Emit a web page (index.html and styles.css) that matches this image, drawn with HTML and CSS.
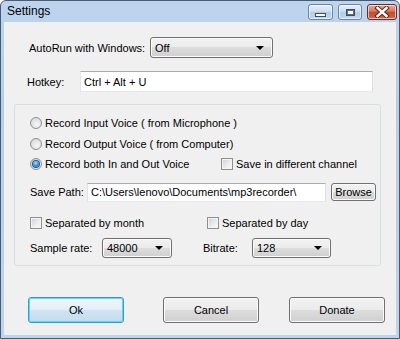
FILE: index.html
```html
<!DOCTYPE html>
<html lang="en">
<head>
    <meta charset="UTF-8">
    <meta name="viewport" content="width=device-width, initial-scale=1.0">
    <title>Settings</title>
    <link rel="stylesheet" href="styles.css">
</head>
<body>
    <div class="window">
        <div class="titlebar">
            <span class="title">Settings</span>
            <div class="caption">
                <span class="cap cap-min"><i></i></span>
                <span class="cap cap-max"><i></i></span>
                <span class="cap cap-close">
                    <svg width="16" height="12" viewBox="0 0 16 12">
                        <path d="M3.5 2 L12.5 10 M12.5 2 L3.5 10" stroke="#5a2a20" stroke-width="4.4" stroke-linecap="square"/>
                        <path d="M3.5 2 L12.5 10 M12.5 2 L3.5 10" stroke="#fff" stroke-width="2.4" stroke-linecap="square"/>
                    </svg>
                </span>
            </div>
        </div>

        <div class="client">
            <div class="row autorun">
                <label class="autorun-label">AutoRun with Windows:</label>
                <div class="combo combo-autorun"><span>Off</span><i class="arrow"></i></div>
            </div>

            <div class="row hotkey">
                <label class="hotkey-label">Hotkey:</label>
                <div class="textbox hotkey-box">Ctrl + Alt + U</div>
            </div>

            <div class="group">
                <div class="grow r1"><span class="radio"></span>Record Input Voice ( from Microphone )</div>
                <div class="grow r2"><span class="radio"></span>Record Output Voice ( from Computer)</div>
                <div class="grow r3">
                    <span class="opt opt-both"><span class="radio checked"><i></i></span>Record both In and Out Voice</span>
                    <span class="opt"><span class="check"></span>Save in different channel</span>
                </div>
                <div class="grow save">
                    <label class="save-label">Save Path:</label>
                    <div class="textbox path-box">C:\Users\lenovo\Documents\mp3recorder\</div>
                    <div class="btn btn-browse">Browse</div>
                </div>
                <div class="grow month">
                    <span class="opt opt-month"><span class="check"></span>Separated by month</span>
                    <span class="opt"><span class="check"></span>Separated by day</span>
                </div>
                <div class="grow sample">
                    <label class="rate-label">Sample rate:</label>
                    <div class="combo combo-rate"><span>48000</span><i class="arrow"></i></div>
                    <label class="bitrate-label">Bitrate:</label>
                    <div class="combo combo-bitrate"><span>128</span><i class="arrow"></i></div>
                </div>
            </div>

            <div class="buttons">
                <div class="btn btn-big btn-default">Ok</div>
                <div class="btn btn-big btn-cancel">Cancel</div>
                <div class="btn btn-big btn-donate">Donate</div>
            </div>
        </div>
    </div>
</body>
</html>
```

FILE: styles.css
```css
* {
    box-sizing: border-box;
}
body {
    margin: 0;
    font-family: "Liberation Sans", Arial, sans-serif;
    font-size: 11px;
    color: #000;
}
.window {
    width: 400px;
    height: 339px;
    display: flex;
    flex-direction: column;
    border: 1px solid #4a5b70;
    border-radius: 6px 6px 0 0;
    background: linear-gradient(#bdd4ee, #b7cee9 30%, #bed3ec);
    padding: 0 3px 3px;
}
.titlebar {
    height: 21px;
    display: flex;
    align-items: flex-start;
}
.title {
    font-size: 12px;
    line-height: 14px;
    margin: 3px 0 0 3px;
}
.caption {
    margin-left: auto;
    margin-right: -1px;
    display: flex;
    margin-top: 3px;
}
.cap {
    height: 16px;
    display: flex;
    align-items: center;
    justify-content: center;
    border: 1px solid #6e84a0;
    border-radius: 3px;
    background: linear-gradient(#e4eefa, #cfdff2 45%, #b5cbe6 50%, #c3d7ee);
    box-shadow: inset 0 0 0 1px rgba(255, 255, 255, 0.6);
}
.cap-min {
    width: 25px;
}
.cap-min i {
    width: 11px;
    height: 4px;
    margin-top: 5px;
    background: #fff;
    border: 1px solid #3c4d63;
}
.cap-max {
    width: 24px;
    margin-left: 5px;
}
.cap-max i {
    width: 9px;
    height: 7px;
    border: 1px solid #3c4d63;
    background: #fff;
    box-shadow: inset 0 0 0 1px #5d6f86;
}
.cap-close {
    width: 30px;
    margin-left: 5px;
    border-color: #6d2d23;
    background: linear-gradient(#ebaa98, #d9785f 45%, #c4462d 50%, #d36a4a);
}
.client {
    flex: 1;
    background: #f0f0f0;
}
.row {
    display: flex;
    align-items: center;
    height: 21px;
}
.autorun {
    margin-top: 15px;
    padding-left: 25px;
}
.autorun-label {
    width: 121px;
}
.combo {
    display: flex;
    align-items: center;
    height: 21px;
    padding: 0 8px 0 4px;
    border: 1px solid #707070;
    border-radius: 3px;
    background: linear-gradient(#f2f2f2, #ebebeb 50%, #dddddd 50%, #cfcfcf);
    box-shadow: inset 0 0 0 1px #fbfbfb;
}
.combo span {
    flex: 1;
}
.arrow {
    width: 0;
    height: 0;
    border-left: 4px solid transparent;
    border-right: 4px solid transparent;
    border-top: 4px solid #000;
}
.combo-autorun {
    width: 123px;
}
.hotkey {
    margin-top: 13px;
    padding-left: 23px;
}
.hotkey-label {
    width: 53px;
}
.textbox {
    display: flex;
    align-items: center;
    background: #fff;
    border: 1px solid;
    border-color: #abadb3 #dbdfe6 #e3e9ef #e2e3ea;
    white-space: nowrap;
    overflow: hidden;
}
.hotkey-box {
    width: 293px;
    height: 21px;
    padding-left: 3px;
}
.group {
    margin: 12px 0 0 10px;
    width: 367px;
    height: 162px;
    border: 1px solid #d5dfe5;
    border-radius: 3px;
    padding: 7px 0 7px 15px;
}
.grow {
    display: flex;
    align-items: center;
    height: 20px;
}
.r1, .r2 {
    height: 21px;
}
.r3 {
    height: 19px;
}
.opt {
    display: flex;
    align-items: center;
}
.opt-both {
    width: 191px;
}
.opt-month {
    width: 177px;
}
.radio {
    width: 12px;
    height: 12px;
    margin-right: 3px;
    border: 1px solid #8e8f8f;
    border-radius: 50%;
    background: radial-gradient(circle at 60% 65%, #f8f8f8, #dcdcdc 70%);
    display: flex;
    align-items: center;
    justify-content: center;
}
.radio.checked i {
    width: 6px;
    height: 6px;
    border-radius: 50%;
    background: radial-gradient(circle at 45% 35%, #a6e3fa, #2b8fd3 55%, #0c4f93);
    box-shadow: 0 0 0 1px #215a8e;
}
.check {
    width: 12px;
    height: 12px;
    margin-right: 3px;
    border: 1px solid #8e8f8f;
    background: linear-gradient(135deg, #cdd0d4, #eceef0 60%, #f8f8f8);
    box-shadow: inset 0 0 0 1px #f4f4f4;
}
.save {
    margin-top: 9px;
}
.save-label {
    width: 57px;
}
.path-box {
    width: 239px;
    height: 19px;
    padding-left: 3px;
}
.btn {
    display: flex;
    align-items: center;
    justify-content: center;
    border: 1px solid #707070;
    border-radius: 3px;
    background: linear-gradient(#f2f2f2, #ebebeb 50%, #dddddd 50%, #cfcfcf);
    box-shadow: inset 0 0 0 1px #fbfbfb;
}
.btn-browse {
    width: 45px;
    height: 18px;
    margin-left: 5px;
}
.month {
    margin-top: 11px;
}
.sample {
    margin-top: 5px;
}
.rate-label {
    width: 72px;
}
.combo-rate {
    width: 70px;
    height: 20px;
}
.bitrate-label {
    width: 49px;
    margin-left: 31px;
}
.combo-bitrate {
    width: 79px;
    height: 20px;
}
.buttons {
    display: flex;
    margin-top: 31px;
    padding-left: 24px;
}
.btn-big {
    width: 96px;
    height: 26px;
}
.btn-default {
    border-color: #2a9fd6;
    background: linear-gradient(#eef6fb, #e3eff8 50%, #d0e4f2 50%, #c4dcee);
    box-shadow: inset 0 0 0 1px #62d4f7;
}
.btn-cancel {
    margin-left: 39px;
}
.btn-donate {
    margin-left: 30px;
}
```
